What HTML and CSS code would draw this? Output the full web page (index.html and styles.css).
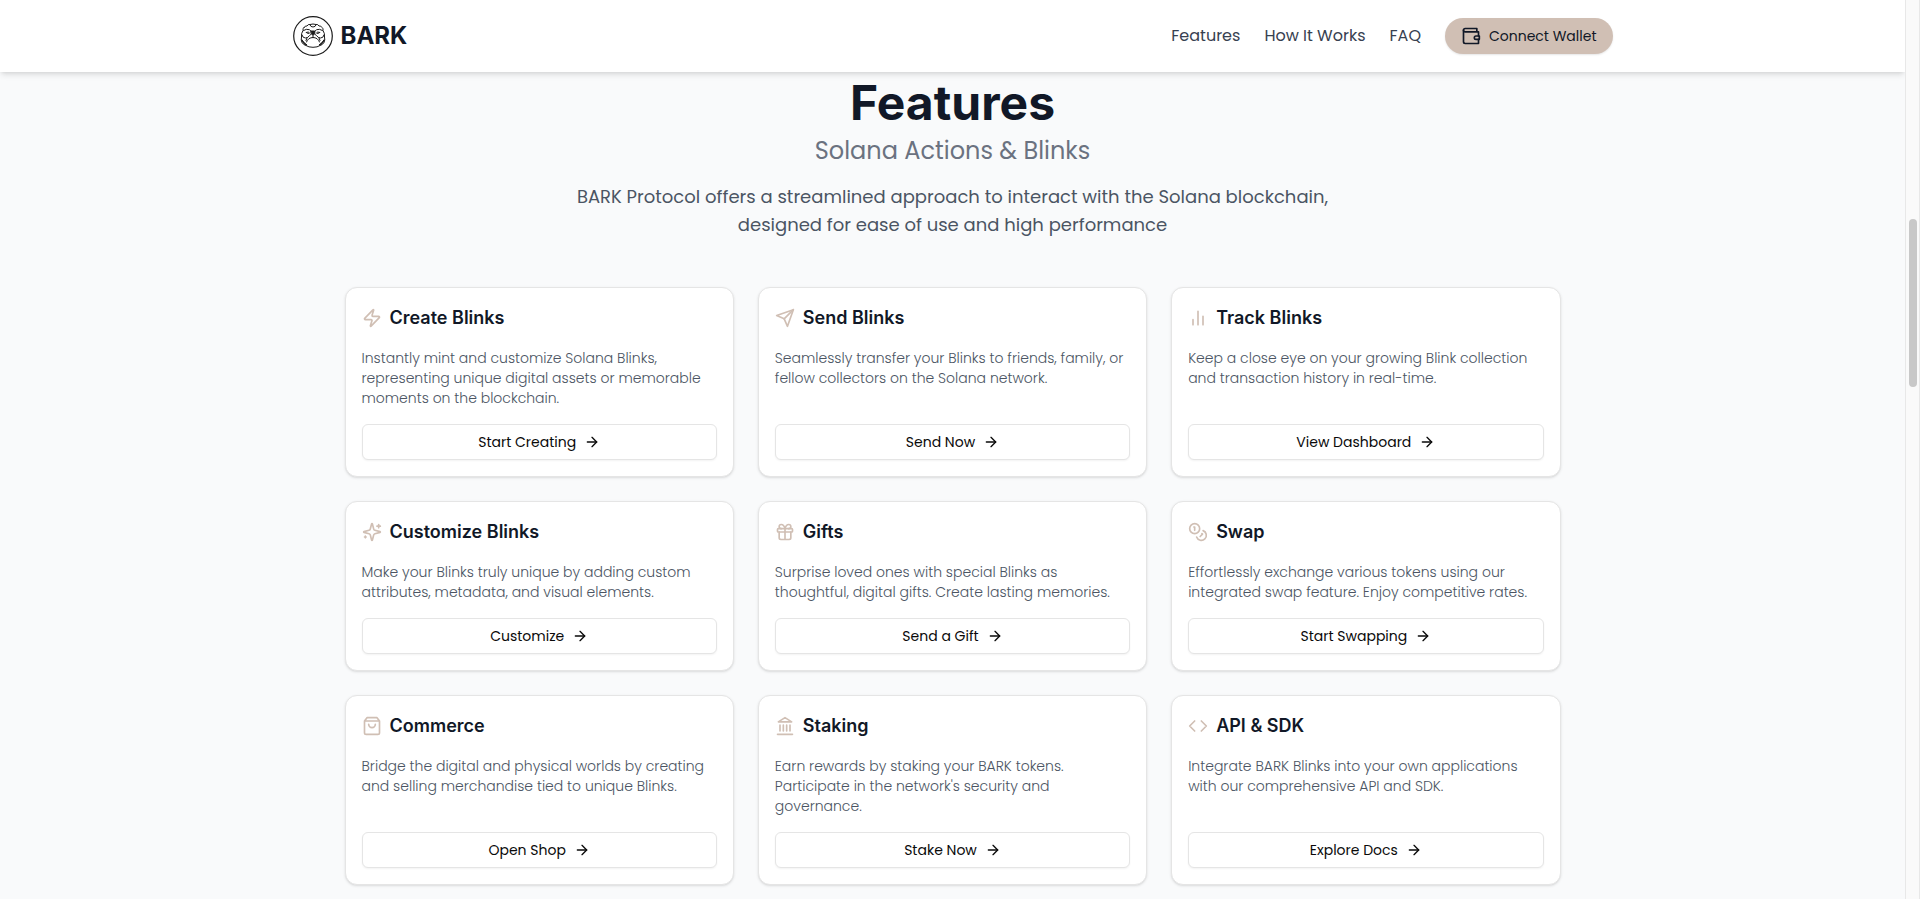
FILE: index.html
```html
<!DOCTYPE html>
<html lang="en">
<head>
<meta charset="utf-8">
<meta name="viewport" content="width=device-width, initial-scale=1">
<title>BARK - Features</title>
<link rel="stylesheet" href="styles.css">
</head>
<body>
<svg class="sprite" aria-hidden="true">
  <symbol id="arrow" viewBox="0 0 24 24"><path d="M5 12h14"/><path d="m12 5 7 7-7 7"/></symbol>
</svg>
<div class="shell">
  <div class="page">
    <header class="header">
      <div class="header-inner">
        <a class="brand" href="#">
          <svg class="logo" viewBox="0 0 40 40" aria-hidden="true">
            <circle cx="20" cy="20" r="19.3" stroke-width="1.2"/>
            <path d="M11 11.500q1-2 3-1.500 1-2 3-1.500 3-1 6 0 2-.5 3 1.500 2-.5 3 1.500 1.500 1 1 3 2 3 1.500 6.500.8 3-.5 5.500-1.500 2.500-4 3-2.500 1.800-7 1.800t-7-1.800q-2.500-.5-4-3-1.300-2.500-.5-5.500-.5-3.500 1.500-6.500-.5-2 1-3Z"/>
            <path d="M17 9q.5 2 3 2t3-2M10.500 14.500q3-2 6-.8l2 2M29.500 14.500q-3-2-6-.8l-2 2M9 19q.5 3 3.500 3 2.500 0 4-2.500l2-1.500M31 19q-.5 3-3.500 3-2.500 0-4-2.500l-2-1.500"/>
            <path d="M13.500 16.500q2-1.500 3 .5-1.500 1.500-3-.5ZM26.500 16.500q-2-1.500-3 .5 1.500 1.500 3-.5Z"/>
            <path d="M20 19.500v2M20 21.500q-5 0-6.500 4.500M20 21.500q5 0 6.500 4.500M14 22l-1 2.500M26 22l1 2.500"/>
            <path class="solid" d="M18.200 15h3.600v2.500L20 19.300l-1.800-1.800ZM9 24q1 4.500 5 5-3-2-5-5ZM31 24q-1 4.500-5 5 3-2 5-5Z"/>
          </svg>
          <span>BARK</span>
        </a>
        <nav class="nav">
          <a href="#features">Features</a>
          <a href="#how">How It Works</a>
          <a href="#faq">FAQ</a>
          <button class="wallet" type="button">
            <svg class="icon" viewBox="0 0 24 24" aria-hidden="true"><path d="M21 12V7H5a2 2 0 0 1 0-4h14v4"/><path d="M3 5v14a2 2 0 0 0 2 2h16v-5"/><path d="M18 12a2 2 0 0 0 0 4h4v-4Z"/></svg>
            Connect Wallet
          </button>
        </nav>
      </div>
    </header>
    <main class="features" id="features">
      <h2>Features</h2>
      <p class="subtitle">Solana Actions &amp; Blinks</p>
      <p class="intro">BARK Protocol offers a streamlined approach to interact with the Solana blockchain, designed for ease of use and high performance</p>
      <div class="grid">
        <article class="card">
          <h3><svg class="icon" viewBox="0 0 24 24"><path d="M4 14a1 1 0 0 1-.78-1.630l9.900-10.200a.5.5 0 0 1 .86.460l-1.920 6.020A1 1 0 0 0 13 10h7a1 1 0 0 1 .78 1.630l-9.900 10.200a.5.5 0 0 1-.86-.460l1.920-6.020A1 1 0 0 0 11 14z"/></svg>Create Blinks</h3>
          <p>Instantly mint and customize Solana Blinks, representing unique digital assets or memorable moments on the blockchain.</p>
          <button type="button">Start Creating<svg class="arrow"><use href="#arrow"/></svg></button>
        </article>
        <article class="card">
          <h3><svg class="icon" viewBox="0 0 24 24"><path d="m22 2-7 20-4-9-9-4Z"/><path d="M22 2 11 13"/></svg>Send Blinks</h3>
          <p>Seamlessly transfer your Blinks to friends, family, or fellow collectors on the Solana network.</p>
          <button type="button">Send Now<svg class="arrow"><use href="#arrow"/></svg></button>
        </article>
        <article class="card">
          <h3><svg class="icon" viewBox="0 0 24 24"><path d="M18 20V10M12 20V4M6 20v-6"/></svg>Track Blinks</h3>
          <p>Keep a close eye on your growing Blink collection and transaction history in real-time.</p>
          <button type="button">View Dashboard<svg class="arrow"><use href="#arrow"/></svg></button>
        </article>
        <article class="card">
          <h3><svg class="icon" viewBox="0 0 24 24"><path d="M9.937 15.500A2 2 0 0 0 8.500 14.063l-6.135-1.582a.5.5 0 0 1 0-.962L8.500 9.936A2 2 0 0 0 9.937 8.500l1.582-6.135a.5.5 0 0 1 .963 0L14.063 8.500A2 2 0 0 0 15.500 9.937l6.135 1.581a.5.5 0 0 1 0 .964L15.500 14.063a2 2 0 0 0-1.437 1.437l-1.582 6.135a.5.5 0 0 1-.963 0z"/><path d="M20 3v4M22 5h-4M4 17v2M5 18H3"/></svg>Customize Blinks</h3>
          <p>Make your Blinks truly unique by adding custom attributes, metadata, and visual elements.</p>
          <button type="button">Customize<svg class="arrow"><use href="#arrow"/></svg></button>
        </article>
        <article class="card">
          <h3><svg class="icon" viewBox="0 0 24 24"><rect x="3" y="8" width="18" height="4" rx="1"/><path d="M12 8v13M19 12v7a2 2 0 0 1-2 2H7a2 2 0 0 1-2-2v-7"/><path d="M7.500 8a2.500 2.500 0 0 1 0-5A4.800 8 0 0 1 12 8a4.800 8 0 0 1 4.500-5 2.500 2.500 0 0 1 0 5"/></svg>Gifts</h3>
          <p>Surprise loved ones with special Blinks as thoughtful, digital gifts. Create lasting memories.</p>
          <button type="button">Send a Gift<svg class="arrow"><use href="#arrow"/></svg></button>
        </article>
        <article class="card">
          <h3><svg class="icon" viewBox="0 0 24 24"><circle cx="8" cy="8" r="6"/><path d="M18.090 10.370A6 6 0 1 1 10.340 18M7 6h1v4M16.710 13.880l.7.710-2.820 2.820"/></svg>Swap</h3>
          <p>Effortlessly exchange various tokens using our integrated swap feature. Enjoy competitive rates.</p>
          <button type="button">Start Swapping<svg class="arrow"><use href="#arrow"/></svg></button>
        </article>
        <article class="card">
          <h3><svg class="icon" viewBox="0 0 24 24"><path d="M6 2 3 6v14a2 2 0 0 0 2 2h14a2 2 0 0 0 2-2V6l-3-4ZM3 6h18M16 10a4 4 0 0 1-8 0"/></svg>Commerce</h3>
          <p>Bridge the digital and physical worlds by creating and selling merchandise tied to unique Blinks.</p>
          <button type="button">Open Shop<svg class="arrow"><use href="#arrow"/></svg></button>
        </article>
        <article class="card">
          <h3><svg class="icon" viewBox="0 0 24 24"><path d="M3 22h18M6 18v-7M10 18v-7M14 18v-7M18 18v-7M12 2l8 5H4Z"/></svg>Staking</h3>
          <p>Earn rewards by staking your BARK tokens. Participate in the network's security and governance.</p>
          <button type="button">Stake Now<svg class="arrow"><use href="#arrow"/></svg></button>
        </article>
        <article class="card">
          <h3><svg class="icon" viewBox="0 0 24 24"><path d="m16 18 6-6-6-6M8 6l-6 6 6 6"/></svg>API &amp; SDK</h3>
          <p>Integrate BARK Blinks into your own applications with our comprehensive API and SDK.</p>
          <button type="button">Explore Docs<svg class="arrow"><use href="#arrow"/></svg></button>
        </article>
      </div>
    </main>
  </div>
  <div class="rail" aria-hidden="true"><div class="thumb"></div></div>
</div>
</body>
</html>
```
FILE: styles.css
```css
* { box-sizing: border-box; margin: 0; }
body {
  font-family: Poppins, Inter, "Open Sans", sans-serif;
  font-size: 14px;
  line-height: 20px;
  color: #111827;
  background: #f9fafb;
}
button { font: inherit; cursor: pointer; }
svg { fill: none; stroke: currentColor; stroke-width: 2; stroke-linecap: round; stroke-linejoin: round; flex: none; }
.sprite { display: none; }
.shell { display: grid; grid-template-columns: 1fr 15px; height: 100vh; overflow: hidden; }
.page { min-width: 0; overflow: hidden; }
.header {
  position: relative;
  background: #fff;
  box-shadow: 0 4px 6px -1px rgb(0 0 0 / 10%), 0 2px 4px -2px rgb(0 0 0 / 10%);
}
.header-inner {
  display: flex;
  align-items: center;
  justify-content: space-between;
  max-width: 1400px;
  min-height: 72px;
  margin: 0 auto;
  padding: 16px 40px;
}
.brand {
  display: flex;
  align-items: center;
  gap: 8px;
  color: #111827;
  font-family: Inter, sans-serif;
  font-size: 24px;
  font-weight: 700;
  line-height: 32px;
  text-decoration: none;
}
.logo { width: 40px; height: 40px; stroke: #1b1b1b; stroke-width: 1; }
.solid { fill: #1b1b1b; }
.nav { display: flex; align-items: center; gap: 24px; }
.nav a { color: #374151; font-size: 16px; line-height: 24px; text-decoration: none; }
.wallet {
  display: flex;
  align-items: center;
  gap: 8px;
  height: 36px;
  padding: 0 16px;
  border: 0;
  border-radius: 18px;
  background: #d0bfb4;
  color: #111827;
  box-shadow: 0 1px 2px rgb(0 0 0 / 10%);
}
.icon { width: 20px; height: 20px; }
.features { max-width: 1280px; margin: 0 auto; padding: 7px 32px 32px; text-align: center; }
h2 { font-family: Inter, sans-serif; font-size: 48px; line-height: 48px; font-weight: 700; color: #111827; }
.subtitle { margin-top: 8px; font-size: 24px; line-height: 32px; color: #6b7280; }
.intro { max-width: 768px; margin: 16px auto 48px; font-size: 18px; line-height: 28px; color: #4b5563; }
.grid { display: grid; grid-template-columns: repeat(3, 1fr); gap: 24px; text-align: left; }
.card {
  display: flex;
  flex-direction: column;
  gap: 16px;
  padding: 16px;
  border: 1px solid #e5e5e5;
  border-radius: 12px;
  background: #fff;
  box-shadow: 0 1px 3px rgb(0 0 0 / 10%), 0 1px 2px -1px rgb(0 0 0 / 10%);
}
.card h3 {
  display: flex;
  align-items: center;
  gap: 8px;
  font-family: Inter, sans-serif;
  font-size: 18px;
  font-weight: 600;
  line-height: 28px;
}
.card h3 .icon { color: #d0bfb4; }
.card p { font-weight: 300; color: #4b5563; }
.card button {
  display: flex;
  align-items: center;
  justify-content: center;
  gap: 8px;
  height: 36px;
  margin-top: auto;
  border: 1px solid #e5e5e5;
  border-radius: 6px;
  background: #fff;
  color: #0a0a0a;
  box-shadow: 0 1px 2px rgb(0 0 0 / 5%);
}
.arrow { width: 16px; height: 16px; }
.rail { position: relative; background: #fafafa; border: solid #e8e8e8; border-width: 0 1px; }
.thumb { position: absolute; top: 219px; left: 3px; width: 8px; height: 168px; border-radius: 4px; background: #c8c8c8; }
```
